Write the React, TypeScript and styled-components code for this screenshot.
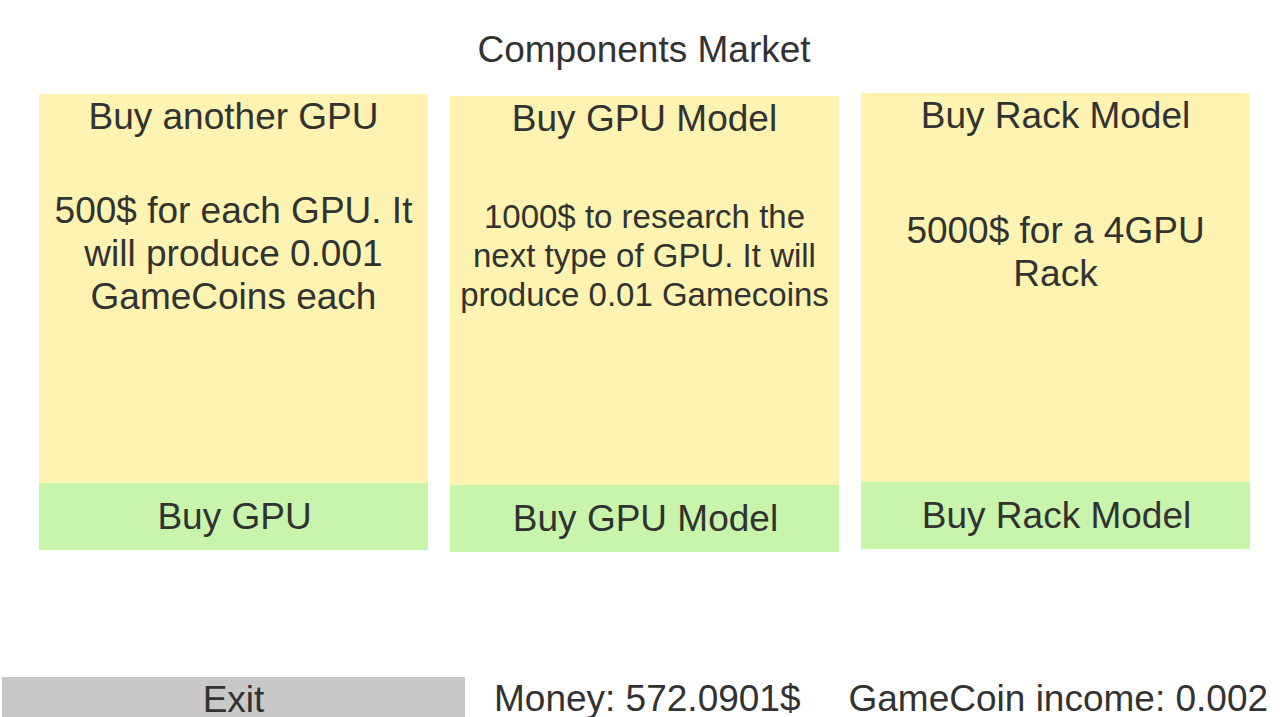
import React from 'react';
import styled, { createGlobalStyle } from 'styled-components';

const GlobalStyle = createGlobalStyle`
  html, body {
    margin: 0;
    padding: 0;
    background: #ffffff;
  }
  body {
    font-family: 'Liberation Sans', Arial, sans-serif;
    color: #323232;
  }
`;

const Page = styled.div`
  width: 1280px;
  height: 717px;
  overflow: hidden;
  display: flex;
  flex-direction: column;
`;

const Title = styled.h1`
  margin: 0;
  padding-top: 29px;
  height: 65px;
  font-size: 37px;
  font-weight: normal;
  line-height: 42px;
  text-align: center;
  padding-left: 8px;
`;

const Cards = styled.div`
  display: flex;
  gap: 22px;
  padding-left: 39px;
`;

const Card = styled.div<{ $offset?: number }>`
  width: 389px;
  display: flex;
  flex-direction: column;
  margin-top: ${(p) => p.$offset ?? 0}px;
`;

const Info = styled.div`
  height: 389px;
  background: #fef3b0;
  display: flex;
  flex-direction: column;
`;

const CardTitle = styled.div`
  height: 46px;
  font-size: 37px;
  line-height: 46px;
  text-align: center;
`;

const Description = styled.div<{ $size?: number }>`
  height: 226px;
  display: flex;
  align-items: center;
  justify-content: center;
  text-align: center;
  font-size: ${(p) => p.$size ?? 37}px;
  line-height: ${(p) => ((p.$size ?? 37) * 1.17).toFixed(0)}px;
  padding: 0 4px;
`;

const BuyButton = styled.button`
  height: 67px;
  border: none;
  background: #c9f4ab;
  color: #323232;
  font-family: 'Liberation Sans', Arial, sans-serif;
  font-size: 37px;
  padding: 0 0 0 2px;
  cursor: pointer;
`;

const Spacer = styled.div`
  flex: 1;
`;

const BottomBar = styled.div`
  display: flex;
  align-items: flex-start;
  height: 40px;
  flex-shrink: 0;
`;

const ExitButton = styled.button`
  width: 463px;
  height: 40px;
  margin-left: 2px;
  border: none;
  background: #c8c8c8;
  color: #323232;
  font-family: 'Liberation Sans', Arial, sans-serif;
  font-size: 37px;
  line-height: 38px;
  padding: 4px 0 0 0;
  flex-shrink: 0;
  overflow: visible;
`;

const Stat = styled.span<{ $gap: number }>`
  margin-left: ${(p) => p.$gap}px;
  margin-top: 3px;
  font-size: 37px;
  line-height: 37px;
  white-space: nowrap;
  display: inline-block;
`;

const offers = [
  {
    title: 'Buy another GPU',
    text: ['500$ for each GPU. It', 'will produce 0.001', 'GameCoins each'],
    button: 'Buy GPU',
    size: 37,
    offset: 0,
  },
  {
    title: 'Buy GPU Model',
    text: ['1000$ to research the', 'next type of GPU. It will', 'produce 0.01 Gamecoins'],
    button: 'Buy GPU Model',
    size: 33,
    offset: 2,
  },
  {
    title: 'Buy Rack Model',
    text: ['5000$ for a 4GPU', 'Rack'],
    button: 'Buy Rack Model',
    size: 37,
    offset: -1,
  },
];

export default function App() {
  return (
    <Page>
      <GlobalStyle />
      <Title>Components Market</Title>
      <Cards>
        {offers.map((o) => (
          <Card key={o.title} $offset={o.offset}>
            <Info>
              <CardTitle>{o.title}</CardTitle>
              <Description $size={o.size}>
                <div>
                  {o.text.map((line, i) => (
                    <div key={i}>{line}</div>
                  ))}
                </div>
              </Description>
            </Info>
            <BuyButton>{o.button}</BuyButton>
          </Card>
        ))}
      </Cards>
      <Spacer />
      <BottomBar>
        <ExitButton>Exit</ExitButton>
        <Stat $gap={29}>Money: 572.0901$</Stat>
        <Stat $gap={48}>GameCoin income: 0.002</Stat>
      </BottomBar>
    </Page>
  );
}
